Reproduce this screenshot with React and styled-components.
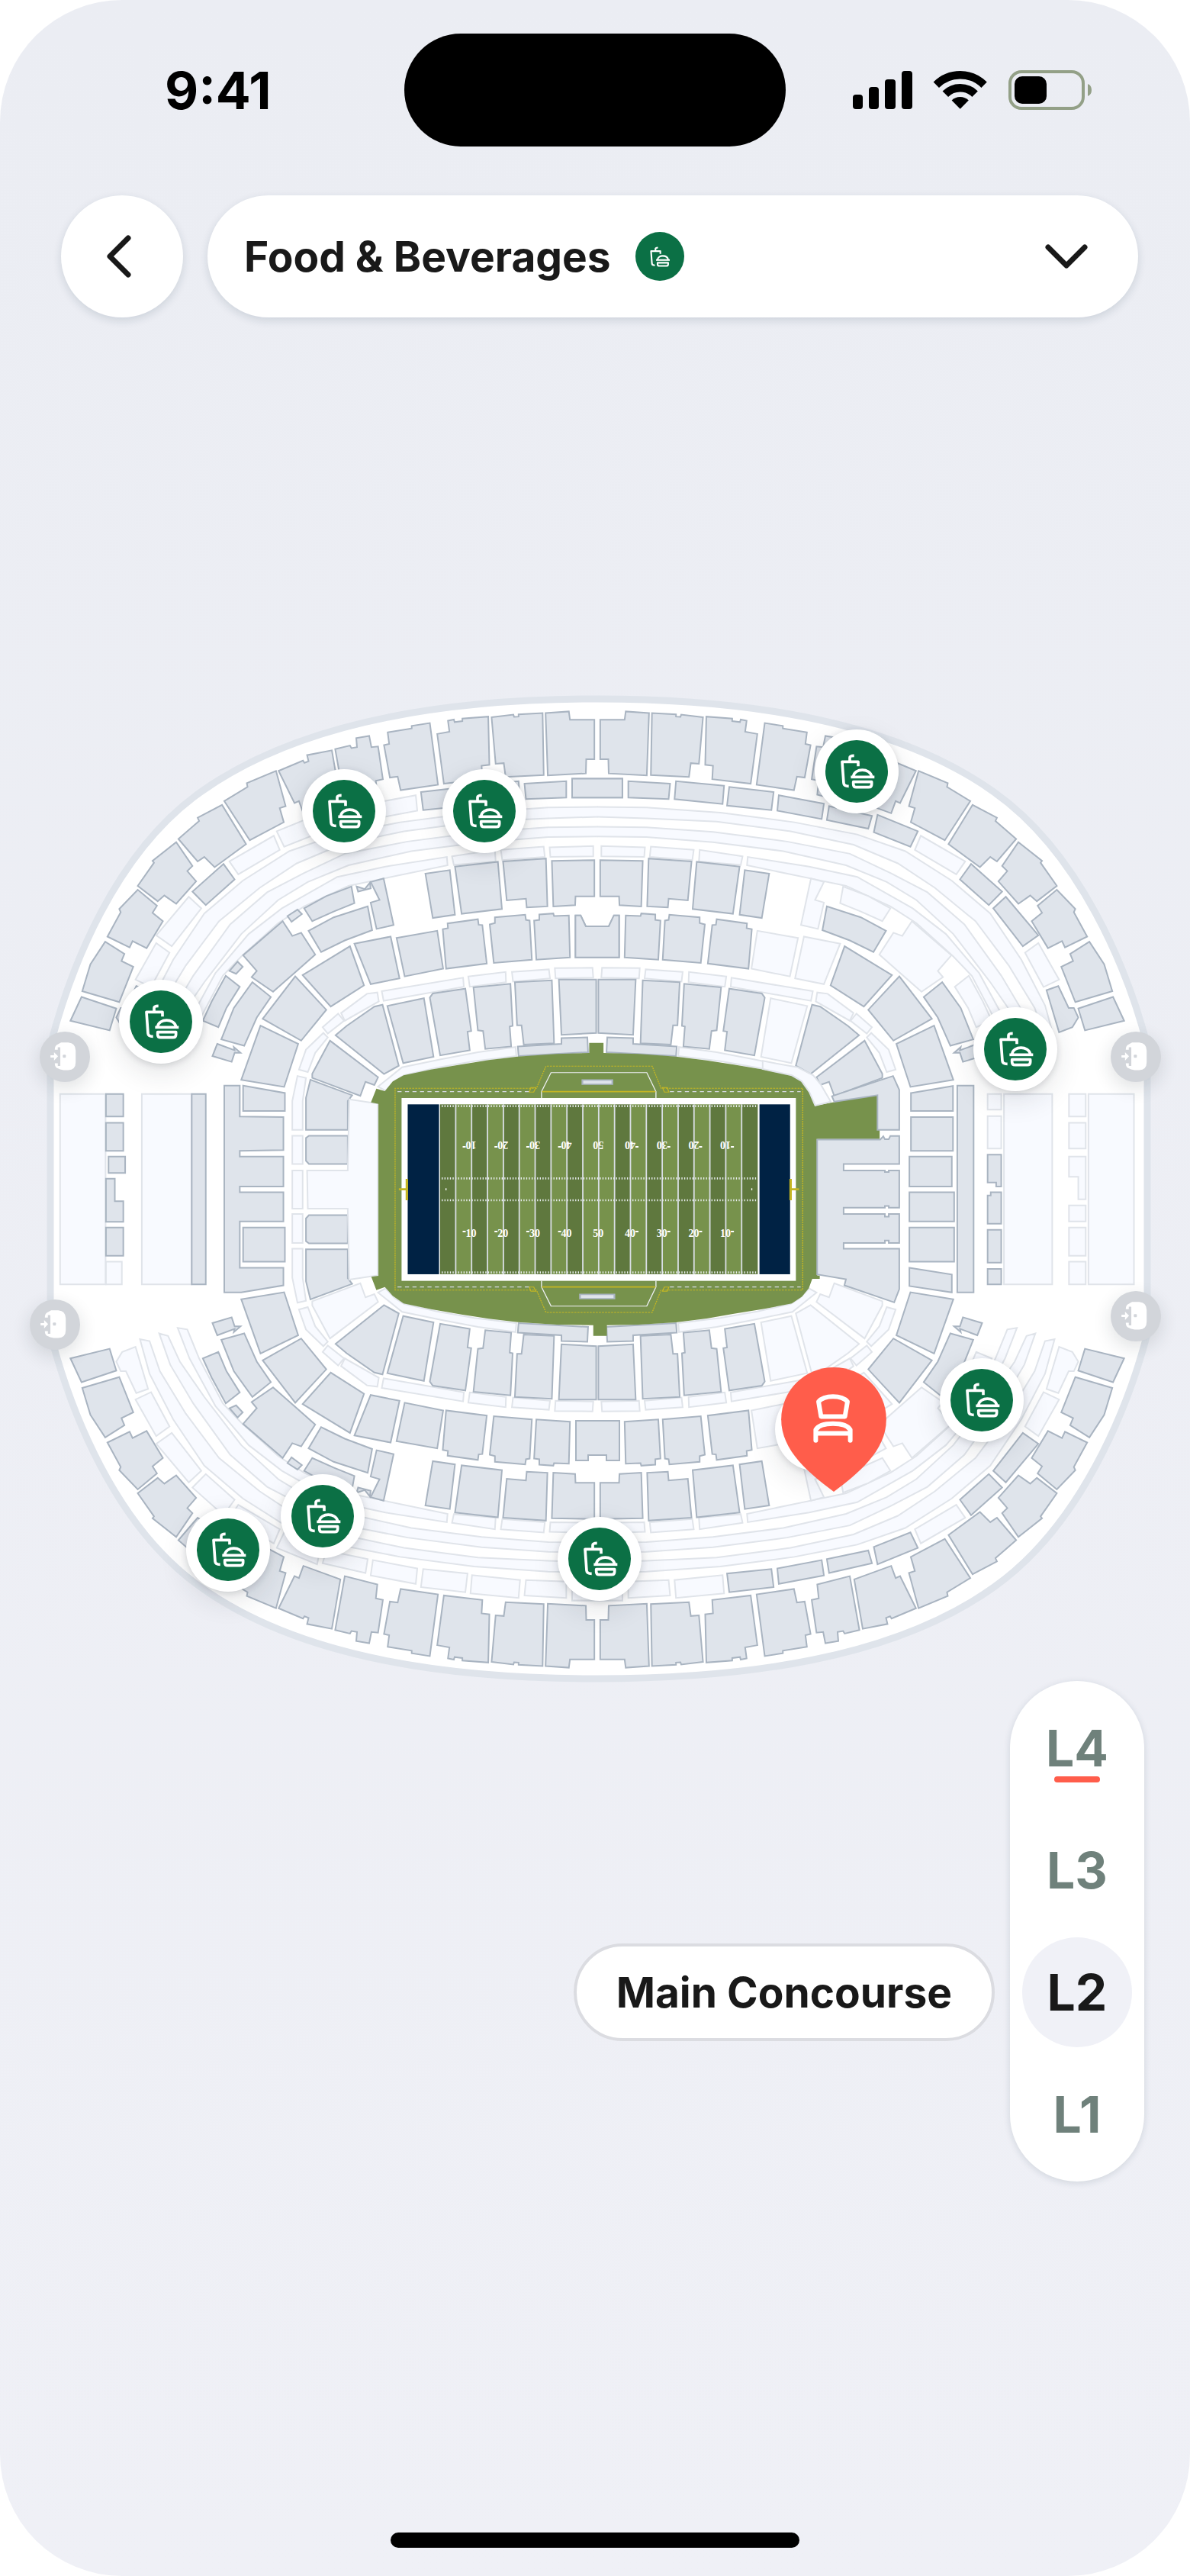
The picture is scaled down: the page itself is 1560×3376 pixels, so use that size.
import React, { useState } from "react";
import styled, { createGlobalStyle } from "styled-components";

const colors = {
  page: "#ebedf3",
  pageEnd: "#eff0f6",
  ink: "#191919",
  muted: "#6f817b",
  green: "#0b7045",
  coral: "#ff5d4b",
  grass: "#77924c",
  grassDark: "#5f783e",
  navy: "#002244",
  gold: "#c4b623",
  seat: "#dfe4eb",
  seatLine: "#a9b4c1",
  off: "#f8faff",
  offLine: "#e0e4ea",
};

const GlobalStyle = createGlobalStyle`
  body {
    margin: 0;
    background: #ffffff;
    font-family: Inter, "Liberation Sans", sans-serif;
  }

  * {
    box-sizing: border-box;
  }
`;

const Screen = styled.main`
  display: flex;
  flex-direction: column;
  min-height: 100vh;
  border-radius: 160px;
  overflow: hidden;
  background: linear-gradient(${colors.page}, ${colors.pageEnd});
  color: ${colors.ink};
`;

const StatusBar = styled.div`
  display: grid;
  grid-template-columns: 1fr 500px 1fr;
  align-items: center;
  padding-top: 44px;
`;

const Clock = styled.time`
  padding-left: 216px;
  font-size: 68px;
  font-weight: 700;
  line-height: 80px;
  color: #000000;
`;

const Island = styled.div`
  height: 148px;
  border-radius: 74px;
  background: #000000;
`;

const StatusIcons = styled.div`
  display: flex;
  justify-content: flex-end;
  padding-right: 128px;
`;

const Header = styled.header`
  display: flex;
  gap: 32px;
  padding: 64px 68px 0 80px;
`;

const BackButton = styled.button`
  display: flex;
  align-items: center;
  justify-content: center;
  width: 160px;
  height: 160px;
  flex-shrink: 0;
  padding: 0 4px 0 0;
  border: none;
  border-radius: 50%;
  background: #ffffff;
  box-shadow: 0 4px 12px rgba(20, 50, 70, 0.14);
  cursor: pointer;
`;

const Picker = styled.label`
  display: flex;
  align-items: center;
  flex-grow: 1;
  height: 160px;
  padding: 0 64px 0 48px;
  border-radius: 80px;
  background: #ffffff;
  box-shadow: 0 4px 12px rgba(20, 50, 70, 0.14);
`;

const PickerSelect = styled.select`
  appearance: none;
  field-sizing: content;
  margin-right: 32px;
  padding: 0;
  border: none;
  background: none;
  color: ${colors.ink};
  font-family: inherit;
  font-size: 55px;
  font-weight: 700;
  line-height: 80px;
`;

const Badge = styled.span`
  display: flex;
  align-items: center;
  justify-content: center;
  width: ${({ $size }) => $size}px;
  height: ${({ $size }) => $size}px;
  border-radius: 50%;
  background: ${colors.green};
`;

const PickerArrow = styled.svg`
  margin-left: auto;
`;

const MapArea = styled.section`
  position: relative;
  margin-top: 464px;
`;

const MapSvg = styled.svg`
  display: block;
  width: 100%;
  overflow: visible;
`;

const Pin = styled.button`
  position: absolute;
  left: ${({ $x }) => $x}%;
  top: ${({ $y }) => $y}%;
  display: flex;
  align-items: center;
  justify-content: center;
  padding: 0;
  border: none;
  border-radius: 50%;
  transform: translate(-50%, -50%);
  cursor: pointer;
`;

const FoodPin = styled(Pin)`
  width: 110px;
  height: 110px;
  background: #ffffff;
  box-shadow: 0 2px 8px rgba(30, 40, 50, 0.16), 0 12px 36px rgba(30, 40, 50, 0.12);
`;

const DoorPin = styled(Pin)`
  width: 66px;
  height: 66px;
  background: #d2d5da;
  box-shadow: 0 8px 24px rgba(30, 40, 50, 0.14);
`;

const SeatPin = styled(Pin)`
  border-radius: 0;
  background: none;
  transform: translate(-50%, -100%);
`;

const Controls = styled.div`
  display: flex;
  justify-content: flex-end;
  align-items: flex-end;
  gap: 20px;
  padding-right: 60px;
`;

const LevelName = styled.div`
  margin-bottom: 184px;
  padding: 0 52px;
  border: 4px solid #dbdce1;
  border-radius: 64px;
  background: #ffffff;
  font-size: 55px;
  font-weight: 700;
  line-height: 120px;
`;

const Levels = styled.nav`
  display: flex;
  flex-direction: column;
  gap: 16px;
  padding: 16px;
  border-radius: 88px;
  background: #ffffff;
  box-shadow: 0 2px 10px rgba(20, 50, 70, 0.14);
`;

const LevelButton = styled.button`
  position: relative;
  width: 144px;
  height: 144px;
  padding: 0;
  border: none;
  border-radius: 50%;
  background: ${({ $active }) => ($active ? "#f0f1f7" : "transparent")};
  color: ${({ $active }) => ($active ? colors.ink : colors.muted)};
  font-family: inherit;
  font-size: 66px;
  font-weight: 700;
  cursor: pointer;
`;

const Underline = styled.span`
  position: absolute;
  left: 42px;
  bottom: 27px;
  width: 60px;
  height: 8px;
  border-radius: 4px;
  background: ${colors.coral};
`;

const HomeBar = styled.div`
  width: 536px;
  height: 20px;
  margin: auto auto 37px;
  border-radius: 10px;
  background: #000000;
`;

// Seating shapes of one quarter of the bowl. The other quarters mirror them.
const outerRing = [
  "1393,82 1456,77 1459,103 1525,103 1525,226 1503,226 1502,270 1399,276",
  "1247,95 1306,87 1308,94 1320,93 1320,86 1385,82 1388,275 1285,281 1280,238 1258,240",
  "1100,147 1133,140 1129,106 1145,102 1147,110 1168,107 1168,99 1238,93 1241,243 1220,246 1222,288 1118,302",
  "966,142 1031,130 1031,122 1080,113 1102,305 1001,322 993,280 972,283 956,182 970,178",
  "824,194 864,183 868,191 883,188 881,160 916,153 922,188 940,186 953,288 934,293 938,336 850,362",
  "671,262 737,230 741,237 752,232 748,213 815,198 838,352 738,394 726,356 714,362",
  "524,356 587,312 585,300 664,262 690,372 674,378 685,422 593,478",
  "400,474 456,418 452,408 518,368 583,490 498,562 470,530 452,544",
  "290,620 334,548 330,542 394,484 438,558 424,574 448,606 394,676 362,650 344,668",
  "208,778 244,702 240,692 290,632 342,682 330,704 358,730 314,814 276,792 268,812",
  "140,948 162,864 202,794 254,832 246,854 278,872 240,982",
  "108,1040 138,966 232,1002 214,1070",
];

const boxes = {
  M1: "1465,286 1601,286 1601,345 1465,345",
  M2: "1336,302 1449,294 1449,345 1340,350",
  M3: "1190,308 1320,294 1324,350 1194,365",
  M4: "1056,328 1176,312 1182,370 1062,384",
  M5: "920,364 1042,338 1046,386 926,412",
  M6: "790,402 906,372 912,415 800,442",
  M7: "666,450 775,399 785,453 686,498",
  M8: "538,544 658,464 674,508 562,584",
  M9: "438,638 522,552 552,600 474,680",
  M10: "340,774 428,654 462,690 382,808",
  M11: "284,912 340,798 376,828 326,935",
  M12: "232,1030 244,1000 258,1000 286,932 318,945 284,1076 248,1060",
};

// These run on into the next quarter, so they stay open at the shared edge.
const openBands = [
  "1534,405 1400,410 1210,420 1010,450 840,492 720,550 620,626 510,730 420,868 350,1000 322,1094 296,1100 322,992 386,850 470,706 574,604 700,512 830,460 1000,422 1200,392 1400,376 1534,374",
  "1534,466 1400,468 1220,484 1030,512 860,556 750,608 670,664 570,770 470,920 404,1030 372,1110 348,1118 378,1020 440,900 540,740 640,640 740,580 850,520 1020,482 1220,452 1400,438 1534,436",
];

const lightRows = [
  "398,1135 430,1040 500,892 590,770 680,690 830,592 960,560 1126,530 1128,556 960,596 860,620 740,684 670,736 570,840 520,900 456,1040 424,1130",
  "1140,528 1256,508 1258,544 1145,555",
  "1272,508 1388,498 1391,530 1276,540",
  "1404,500 1522,496 1522,528 1406,530",
  "950,948 1170,906 1172,934 955,978",
  "1184,902 1285,888 1286,920 1188,934",
  "1302,888 1402,880 1405,908 1305,918",
  "1418,876 1520,875 1522,906 1420,908",
  "840,1016 910,956 938,952 942,980 850,1040",
  "790,1060 832,1018 848,1040 804,1080",
  "726,1192 745,1130 792,1078 804,1092 770,1140 750,1200",
];

const edgeStrip =
  "940,1245 1005,1185 1110,1160 1210,1138 1312,1122 1314,1150 1200,1166 1100,1186 1010,1210 985,1228 960,1258";

const stands = {
  R1: "1068,582 1134,571 1148,710 1088,720",
  R2: "1148,560 1264,545 1275,692 1166,707",
  R3: "1278,544 1394,535 1398,684 1342,687 1340,660 1288,665",
  R4: "1410,542 1525,540 1525,653 1474,653 1473,680 1414,684",
  C1: "920,608 955,597 982,742 936,754 920,672 944,664",
  C2: "740,690 800,652 868,622 876,674 820,700 762,730",
  C2a: "882,622 904,630 918,610 920,628 886,638",
  C3: "752,760 820,718 912,684 924,758 850,790 786,826",
  C4: "575,836 682,730 708,776 732,766 770,834 720,885 656,950 598,904 612,885",
  C4a: "695,714 722,694 734,708 706,732",
  C5: "466,1040 490,980 528,900 566,934 530,1000 508,1060",
  C5a: "538,885 560,856 574,872 556,894",
  C6: "516,1098 550,1000 600,920 650,966 612,1030 578,1118",
  C7: "505,1112 552,1132 550,1122 568,1140 552,1140 544,1168 492,1150",
  F6: "1474,712 1488,712 1502,746 1564,746 1578,712 1592,712 1592,843 1474,843",
  F5: "1362,728 1376,726 1376,709 1414,706 1416,714 1456,712 1459,843 1368,850",
  F4: "1242,740 1256,736 1256,718 1338,710 1340,726 1350,728 1356,850 1253,860",
  F3: "1115,755 1129,752 1128,737 1210,724 1212,741 1222,742 1234,862 1124,878",
  F2: "990,782 1100,760 1116,878 1012,902",
  F1: "876,800 974,778 998,908 920,926",
  F0: "736,898 864,808 902,930 812,996",
  G1: "628,1034 716,902 800,1006 732,1102",
  G2: "570,1224 622,1055 724,1112 686,1246",
  I1: "1429,912 1530,912 1530,1078 1436,1084",
  I1a: "1318,1120 1436,1112 1436,1094 1506,1092 1508,1138 1320,1150",
  I2: "1310,920 1410,914 1416,1110 1334,1114 1328,1054 1316,1054",
  I3: "1198,936 1298,925 1304,1056 1296,1058 1300,1120 1230,1128 1224,1072 1210,1070",
  I4: "1080,968 1088,955 1176,940 1192,1072 1182,1074 1188,1132 1108,1148",
  I5: "965,994 1064,970 1090,1152 1008,1172",
  I6: "825,1085 855,1056 930,996 952,990 996,1180 956,1206",
  I7: "762,1205 810,1102 940,1216 930,1240 906,1230 892,1274 762,1218",
};

const leftStand = {
  I8: "745,1380 745,1280 757,1224 870,1272 858,1290 858,1380",
  I9: "745,1405 753,1398 858,1398 858,1486 753,1486 745,1476",
};

// Quarters differ only in which stands are dimmed.
const quarters = [
  {
    id: "top-left",
    transform: "translate(40 900) scale(0.4847 0.4209)",
    dim: ["M5", "M6", "M7", "M8", "M10", "M11"],
    left: true,
  },
  {
    id: "top-right",
    transform: "translate(1526 900) scale(-0.4847 0.4209)",
    dim: ["M8", "M11", "C1", "C2", "C4", "C5", "F2", "F1", "I5"],
    skip: ["C2a", "C4a", "C5a"],
  },
  {
    id: "bottom-left",
    transform: "translate(40 2218) scale(0.4847 -0.4209)",
    dim: ["M1", "M2", "M3", "M4", "M5", "M6", "M7", "M8", "M9", "M10", "M11", "M12", "I7"],
    skip: ["F6"],
    left: true,
  },
  {
    id: "bottom-right",
    transform: "translate(1526 2218) scale(-0.4847 -0.4209)",
    dim: ["M1", "M2", "M3", "M8", "M11", "M12", "C1", "C2", "C3", "C4", "C5", "F2", "F1", "F0", "I5", "I6", "I7"],
    skip: ["C2a", "C4a", "C5a", "F6"],
  },
];

const Shape = styled.polygon`
  fill: ${({ $dim }) => ($dim ? colors.off : colors.seat)};
  stroke: ${({ $dim }) => ($dim ? colors.offLine : colors.seatLine)};
  stroke-width: 2;
  vector-effect: non-scaling-stroke;
`;

const rect = (x1, y1, x2, y2) => `${x1},${y1} ${x2},${y1} ${x2},${y2} ${x1},${y2}`;

const leftSide = [
  ["524,1242 566,1242 566,1338 684,1340 684,1443 566,1445 566,1463 684,1463 684,1556 566,1556 566,1574 684,1574 684,1665 566,1665 566,1809 684,1809 684,1864 570,1886 524,1886"],
  ["575,1242 688,1265 688,1321 575,1321"],
  [rect(575, 1684, 688, 1790)],
  [rect(80, 1268, 203, 1861), true],
  [rect(204, 1268, 251, 1338)],
  [rect(204, 1358, 251, 1445)],
  [rect(211, 1463, 256, 1514)],
  ["204,1532 228,1532 228,1602 251,1602 251,1666 204,1666"],
  [rect(204, 1684, 251, 1772)],
  [rect(204, 1790, 247, 1861), true],
  [rect(301, 1268, 436, 1861), true],
  [rect(436, 1268, 474, 1861)],
  ["708,1380 708,1290 722,1212 745,1218 736,1290 736,1380", true],
  [rect(708, 1398, 736, 1486), true],
  [rect(708, 1506, 736, 1625), true],
  [rect(708, 1642, 736, 1732), true],
  ["708,1750 736,1750 736,1840 745,1912 722,1918 708,1840", true],
  ["862,1285 939,1298 939,1833 862,1846 858,1625 750,1625 748,1506 858,1506", true],
];

const rightSide = [
  ["470,1165 500,1172 560,1185 600,1210 620,1240 645,1292 605,1304 590,1262 570,1228 545,1210 470,1190", true],
  ["851,1265 959,1243 959,1321 851,1321"],
  [rect(851, 1340, 959, 1445)],
  [rect(847, 1463, 956, 1556)],
  [rect(847, 1574, 962, 1665)],
  [rect(847, 1684, 962, 1790)],
  ["847,1809 956,1830 956,1886 847,1866"],
  [rect(970, 1242, 1012, 1886)],
  [rect(1048, 1268, 1083, 1317), true],
  [rect(1048, 1337, 1083, 1438), true],
  ["1048,1457 1083,1457 1083,1556 1070,1556 1070,1544 1048,1544"],
  ["1048,1584 1056,1584 1056,1574 1083,1574 1083,1672 1048,1672"],
  [rect(1048, 1691, 1083, 1793)],
  [rect(1048, 1813, 1083, 1861)],
  [rect(1090, 1268, 1214, 1861), true],
  [rect(1257, 1268, 1300, 1338), true],
  [rect(1257, 1358, 1300, 1438), true],
  ["1257,1463 1300,1463 1300,1596 1281,1596 1281,1526 1257,1526", true],
  [rect(1257, 1615, 1300, 1665), true],
  [rect(1257, 1684, 1300, 1772), true],
  [rect(1257, 1790, 1300, 1861), true],
  [rect(1307, 1268, 1424, 1861), true],
  ["648,1275 805,1212 821,1255 821,1380 765,1380 765,1272 654,1292"],
  [
    "610,1410 772,1410 780,1400 784,1409 794,1409 798,1399 821,1399 821,1486 678,1486 678,1506 784,1506 784,1511 794,1511 794,1506 821,1506 821,1622 794,1622 794,1617 784,1617 784,1622 678,1622 678,1642 784,1642 784,1650 794,1650 794,1642 821,1642 821,1732 794,1732 794,1724 784,1724 784,1732 678,1732 678,1750 821,1750 821,1876 808,1917 680,1864 684,1845 610,1830",
  ],
];

const Quarter = ({ quarter }) => {
  const { transform, dim, skip = [], left } = quarter;
  const named = { ...boxes, ...stands, ...(left ? leftStand : {}) };

  return (
    <g transform={transform}>
      {openBands.map((points) => (
        <Shape as="polyline" key={points} points={points} $dim />
      ))}
      {[...lightRows, edgeStrip].map((points) => (
        <Shape key={points} points={points} $dim />
      ))}
      {outerRing.map((points) => (
        <Shape key={points} points={points} />
      ))}
      {Object.keys(named)
        .filter((name) => !skip.includes(name))
        .map((name) => (
          <Shape key={name} points={named[name]} $dim={dim.includes(name)} />
        ))}
    </g>
  );
};

const STRIPE = 46.65;
const yards = [10, 20, 30, 40, 50, 40, 30, 20, 10];

const Field = () => (
  <g>
    <g transform="translate(480 1350) scale(0.4464 0.3333)">
      <path
        d="M55 240 L78 202 L110 178 L190 155 L280 135 L360 118 L445 104 L560 94 L655 90 V50 H697 V90 L800 94 L910 104 L1000 119 L1080 136 L1170 156 L1250 178 L1280 202 L1300 240 L1318 298 L1502 250 V392 H1508 V428 H1325 V965 H1332 V978 H1310 L1300 1015 L1280 1048 L1250 1075 L1170 1096 L1080 1115 L1000 1134 L910 1149 L800 1158 L707 1160 V1202 H667 V1160 L560 1158 L445 1148 L360 1135 L280 1118 L190 1097 L110 1075 L78 1045 L55 1010 L30 1022 L15 970 L36 966 V290 L14 284 L30 230 Z"
        fill={colors.grass}
      />
      <g fill="none" stroke={colors.gold} strokeWidth="3">
        <path
          d="M1282 229 H880 L866 229 L840 142 H528 L500 229 H85 V1022 H500 L528 1110 H840 L866 1022 H1282 Z"
          strokeDasharray="6 3"
        />
        <path d="M484 226 H498 L492 244 H479 Z M884 226 H870 L876 244 H889 Z M484 1027 H498 L492 1010 H479 Z M884 1027 H870 L876 1010 H889 Z" />
      </g>
      <path
        d="M92 242 H480 M892 242 H1276 M92 1010 H480 M892 1010 H1276"
        stroke="#d5dae0"
        strokeWidth="4"
        strokeDasharray="12 10"
      />
      <path
        d="M515 267 V242 L543 167 H824 L851 242 V267 M515 986 V1010 L543 1085 H824 L851 1010 V986"
        fill="none"
        stroke="#eef0f3"
        strokeWidth="3"
      />
      <path d="M516 242 H850 M516 1010 H850" stroke={colors.gold} strokeWidth="5" />
      <path d="M635 196 H723 V213 H635 Z M628 1039 H729 V1056 H628 Z" fill={colors.seat} stroke={colors.seatLine} strokeWidth="5" />
      <rect x="104" y="267" width="1158" height="719" fill="#ffffff" />
      <rect x="122" y="292" width="92" height="668" fill={colors.navy} />
      <rect x="1155" y="292" width="90" height="668" fill={colors.navy} />
      {Array.from({ length: 20 }, (_, i) => (
        <rect
          key={i}
          x={217 + i * STRIPE}
          y="292"
          width={STRIPE}
          height="668"
          fill={(i < 10 ? i % 2 === 0 : i % 2 === 1) ? colors.grassDark : colors.grass}
        />
      ))}
      {Array.from({ length: 19 }, (_, i) => (
        <rect key={i} x={261 + i * STRIPE} y="292" width="4" height="668" fill="#d9dee4" />
      ))}
      <path
        d="M222 299 H1150 M222 583 H1150 M222 669 H1150 M222 953 H1150"
        stroke="#e9edf0"
        strokeWidth="8"
        strokeDasharray="3 5"
      />
      <path d="M233 622 H236 V630 H233 Z M1131 622 H1134 V630 H1131 Z" fill="#ffffff" />
      <path
        d="M116 585 H123 V669 H116 V630 H96 V622 H116 Z M1243 585 H1250 V622 H1271 V630 H1250 V669 H1243 Z"
        fill={colors.gold}
      />
    </g>
    {yards.map((yard, i) => {
      const x = 617.5 + i * 41.7;
      const tick = i < 4 ? -9 : 9;
      return (
        <g key={i} fill="#ffffff" fontFamily='"Liberation Serif", serif' fontWeight="bold" fontSize="14" textAnchor="middle">
          <text x={x} y="1621">
            {yard}
          </text>
          <text transform={`translate(${x} 1496) rotate(180)`}>{yard}</text>
          {i !== 4 && (
            <path d={`M${x + tick - 2} 1614 h4 M${x + tick - 2} 1503 h4`} stroke="#ffffff" strokeWidth="2" />
          )}
        </g>
      );
    })}
  </g>
);

const FoodIcon = ({ size }) => (
  <svg width={size} height={size} viewBox="-70 -70 150 140" fill="none" stroke="#ffffff" strokeWidth="11" strokeLinejoin="round">
    <path d="M11 -20 V-38 H-52 L-46 46 Q-45 58 -26 58" />
    <path d="M-22 -40 V-54 Q-22 -62 -5 -62" />
    <path d="M-8 20 C-4 -14 58 -14 64 20" />
    <path d="M-18 22 H75" />
    <path d="M-8 41 H64 V50 Q64 62 52 62 H4 Q-8 62 -8 50 Z" />
  </svg>
);

const DoorIcon = () => (
  <svg width="66" height="66" viewBox="35 50 200 200">
    <path
      d="M120 93 H148 Q178 95 178 125 V172 Q178 202 148 203 H130 Q114 200 108 196 Q95 194 95 176 H107 V186 H117 V112 H107 V122 H95 Q95 104 108 100 Z"
      fill="#ffffff"
    />
    <path d="M78 144 H92 V132 L108 148 L92 165 V153 H78 Z" fill="#ffffff" />
    <rect x="127" y="142" width="12" height="12" rx="3" fill="#d2d5da" />
  </svg>
);

const SeatIcon = () => (
  <svg width="138" height="163" viewBox="0 0 414 490">
    <path d="M207 0 C320 0 414 90 414 205 C414 330 300 420 207 490 C114 420 0 330 0 205 C0 90 94 0 207 0 Z" fill={colors.coral} />
    <g fill="none" stroke="#ffffff" strokeWidth="18" strokeLinejoin="round" strokeLinecap="round">
      <path d="M147 135 L157 194 H251 L261 135 Q244 115 204 115 Q164 115 147 135 Z" />
      <path d="M136 288 V246 Q150 222 204 222 Q258 222 272 246 V288 M136 260 H272" />
    </g>
  </svg>
);

const StatusGlyphs = () => (
  <svg width="314" height="52" viewBox="0 0 314 52">
    <rect x="0" y="32" width="13" height="19" rx="4" />
    <rect x="21" y="22" width="13" height="29" rx="4" />
    <rect x="42" y="12" width="14" height="39" rx="4" />
    <rect x="64" y="1" width="14" height="50" rx="4" />
    <path d="M109.3 19.3 A44.4 44.4 0 0 1 172.1 19.3" fill="none" stroke="#000000" strokeWidth="10.4" />
    <path d="M121.3 31.3 A27.4 27.4 0 0 1 160.1 31.3" fill="none" stroke="#000000" strokeWidth="10.6" />
    <path d="M140.7 50.7 L129.6 39.6 A15.7 15.7 0 0 1 151.8 39.6 Z" />
    <rect x="206" y="2" width="96" height="48" rx="15" fill="none" stroke="#93a087" strokeWidth="4" />
    <rect x="212" y="8" width="42" height="36" rx="10" />
    <path d="M308 18 Q313 20 313 26 Q313 32 308 34 Z" fill="#93a087" />
  </svg>
);

const MAP_TOP = 880;
const MAP_WIDTH = 1560;
const MAP_HEIGHT = 1323;

const place = (x, y) => ({
  $x: (x / MAP_WIDTH) * 100,
  $y: ((y - MAP_TOP) / MAP_HEIGHT) * 100,
});

const foodStands = [
  [451, 1063],
  [635, 1063],
  [1123, 1011],
  [211, 1339],
  [1331, 1375],
  [1071, 1873],
  [1287, 1835],
  [423, 1987],
  [299, 2031],
  [786, 2043],
];

const gates = [
  [85, 1385],
  [1489, 1385],
  [72, 1736],
  [1489, 1725],
];

const levels = ["L4", "L3", "L2", "L1"];

const StadiumMap = () => (
  <MapArea>
    <MapSvg viewBox={`0 ${MAP_TOP} ${MAP_WIDTH} ${MAP_HEIGHT}`} role="img" aria-label="Stadium map">
      <path
        d="M66 1370 C92 1270 150 1118 263 1038 C395 944 590 916 783 916 C976 916 1171 944 1303 1038 C1416 1118 1478 1270 1504 1370 V1748 C1478 1848 1416 2000 1303 2080 C1171 2174 976 2200 783 2200 C590 2200 395 2174 263 2080 C150 2000 92 1848 66 1748 Z"
        fill="#ffffff"
        stroke={colors.seat}
        strokeWidth="9"
      />
      {quarters.map((quarter) => (
        <Quarter key={quarter.id} quarter={quarter} />
      ))}
      <Shape points="755,1862 812,1862 812,1914 795,1914 795,1907 771,1907 771,1914 755,1914" />
      <g transform="translate(40 900) scale(0.4847 0.4209)">
        {leftSide.map(([points, dim]) => (
          <Shape key={points} points={points} $dim={dim} />
        ))}
      </g>
      <Field />
      <g transform="translate(760 900) scale(0.5102 0.4209)">
        {rightSide.map(([points, dim]) => (
          <Shape key={points} points={points} $dim={dim} />
        ))}
      </g>
    </MapSvg>
    {gates.map(([x, y]) => (
      <DoorPin key={`${x}-${y}`} type="button" aria-label="Gate" {...place(x, y)}>
        <DoorIcon />
      </DoorPin>
    ))}
    {foodStands.map(([x, y]) => (
      <FoodPin key={`${x}-${y}`} type="button" aria-label="Food stand" {...place(x, y)}>
        <Badge $size={82}>
          <FoodIcon size={50} />
        </Badge>
      </FoodPin>
    ))}
    <SeatPin type="button" aria-label="Your seat" {...place(1093, 1955)}>
      <SeatIcon />
    </SeatPin>
  </MapArea>
);

const App = () => {
  const [level, setLevel] = useState("L2");

  return (
    <>
      <GlobalStyle />
      <Screen>
        <StatusBar>
          <Clock>9:41</Clock>
          <Island />
          <StatusIcons>
            <StatusGlyphs />
          </StatusIcons>
        </StatusBar>
        <Header>
          <BackButton type="button" aria-label="Back">
            <svg width="40" height="60" viewBox="0 0 40 60" fill="none" stroke={colors.ink} strokeWidth="7" strokeLinecap="round" strokeLinejoin="round">
              <path d="M30 6 L6 30 L30 54" />
            </svg>
          </BackButton>
          <Picker>
            <PickerSelect aria-label="Category">
              <option>Food &amp; Beverages</option>
            </PickerSelect>
            <Badge $size={64}>
              <FoodIcon size={29} />
            </Badge>
            <PickerArrow width="60" height="40" viewBox="0 0 60 40" fill="none" stroke={colors.ink} strokeWidth="7" strokeLinecap="round" strokeLinejoin="round">
              <path d="M6 8 L30 32 L54 8" />
            </PickerArrow>
          </Picker>
        </Header>
        <StadiumMap />
        <Controls>
          <LevelName>Main Concourse</LevelName>
          <Levels aria-label="Levels">
            {levels.map((name) => (
              <LevelButton key={name} type="button" $active={name === level} onClick={() => setLevel(name)}>
                {name}
                {name === "L4" && <Underline />}
              </LevelButton>
            ))}
          </Levels>
        </Controls>
        <HomeBar />
      </Screen>
    </>
  );
};

export default App;
